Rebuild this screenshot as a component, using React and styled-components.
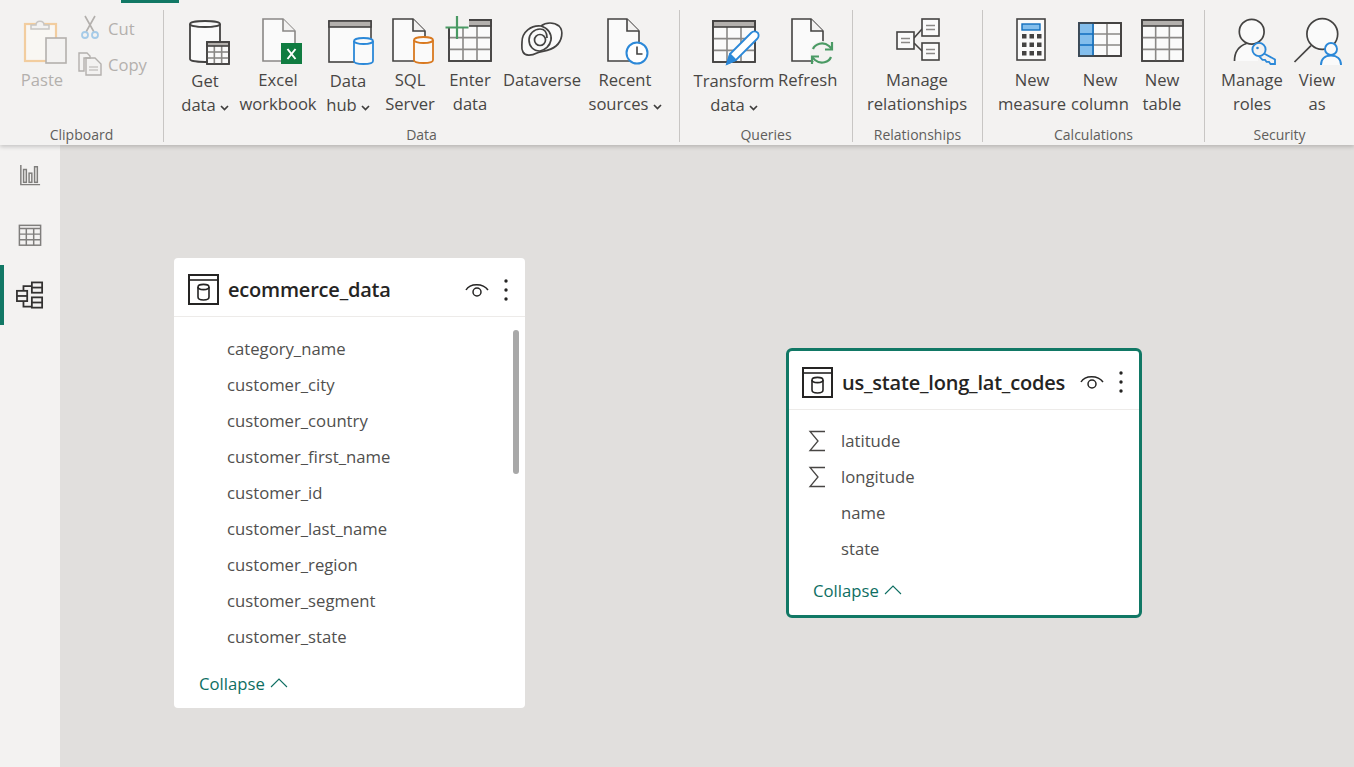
import React from 'react'
import styled, { createGlobalStyle } from 'styled-components'

const TEAL = '#117865'
const INK = '#444342'
const PAPER = '#fafafa'
const HEAD = '#b3b0ad'
const BLUE = '#2b88d8'
const GREEN = '#4a9a64'

const GlobalStyle = createGlobalStyle`
  html, body {
    margin: 0;
    height: 100%;
    overflow: hidden;
    background: #f3f2f1;
    font-family: "Open Sans", "Noto Sans", "Liberation Sans", sans-serif;
  }
`

const Page = styled.div`
  display: flex;
  flex-direction: column;
  height: 100vh;
`

const Ribbon = styled.header`
  position: relative;
  z-index: 2;
  display: flex;
  flex: 0 0 145px;
  background: #f3f2f1;
  box-shadow: 0 2px 4px rgba(0, 0, 0, 0.18);
`

const TabMarker = styled.div`
  position: absolute;
  top: 0;
  left: 121px;
  width: 58px;
  height: 3px;
  background: ${TEAL};
`

const Group = styled.section`
  display: flex;
  flex-direction: column;
  box-sizing: border-box;
  flex: 0 0 ${p => p.$w}px;
  height: 132px;
  margin-top: 10px;
  border-right: ${p => (p.$last ? 'none' : '1px solid #c8c6c4')};
`

const GroupItems = styled.div`
  display: flex;
  flex: 1;
  padding: 8px 0 0 ${p => p.$pad || 0}px;
`

const GroupLabel = styled.div`
  margin: 1px 0 -1px;
  font-size: 14px;
  line-height: 16px;
  text-align: center;
  color: #605e5c;
`

const BigButton = styled.div`
  display: flex;
  flex-direction: column;
  align-items: center;
  flex: 0 0 ${p => p.$w}px;
  color: ${p => (p.$off ? '#b3b0ad' : '#484644')};
  font-size: 16.6px;
  line-height: 24px;
  white-space: nowrap;

  svg.big {
    display: block;
    overflow: visible;
    margin-bottom: ${p => (p.$low ? 3 : 2)}px;
  }
`

const Chevron = styled.svg`
  width: 9px;
  height: 6px;
  margin-left: 4px;
  vertical-align: 0;
  fill: none;
  stroke: #3f3e3d;
  stroke-width: 1.7;
`

const SmallStack = styled.div`
  display: flex;
  flex-direction: column;
  margin: -8px 0 0 6px;
`

const SmallButton = styled.div`
  display: flex;
  align-items: center;
  gap: 6px;
  height: 36px;
  font-size: 16.6px;
  color: #b3b0ad;

  svg {
    flex: 0 0 24px;
    overflow: visible;
  }
`

const Body = styled.main`
  display: flex;
  flex: 1;
  min-height: 0;
`

const Sidebar = styled.nav`
  flex: 0 0 60px;
  background: #f3f2f1;
`

const NavItem = styled.div`
  display: flex;
  align-items: center;
  justify-content: center;
  box-sizing: border-box;
  height: 60px;
  border-left: 4px solid ${p => (p.$active ? TEAL : 'transparent')};
  padding-right: 4px;
`

const Canvas = styled.div`
  position: relative;
  flex: 1;
  overflow: hidden;
  background: #e1dfdd;
`

const Card = styled.article`
  --inset: ${p => (p.$active ? 2 : 0)}px;
  --bleed: ${p => (p.$active ? 0 : 3)}px;
  position: absolute;
  left: ${p => p.$x}px;
  top: ${p => p.$y}px;
  display: flex;
  flex-direction: column;
  box-sizing: border-box;
  width: ${p => p.$w}px;
  height: ${p => p.$h}px;
  background: #fff;
  border: 3px solid ${p => (p.$active ? TEAL : 'transparent')};
  border-radius: ${p => (p.$active ? 6 : 4)}px;
`

const CardHeader = styled.div`
  display: flex;
  align-items: center;
  box-sizing: border-box;
  flex: 0 0 ${p => p.$h}px;
  margin: 0 calc(-1 * var(--bleed));
  padding: calc(2px + var(--inset)) calc(13px + var(--inset) + var(--bleed)) 0 calc(11px + var(--inset) + var(--bleed));
  border-bottom: 1px solid #edebe9;
`

const CardTitle = styled.h3`
  margin: 0 0 0 9px;
  font-size: 20px;
  font-weight: 600;
  color: #252423;
  white-space: nowrap;
  letter-spacing: -0.2px;
`

const HeaderActions = styled.div`
  display: flex;
  align-items: center;
  gap: 14px;
  margin-left: auto;
`

const FieldList = styled.ul`
  flex: 1;
  margin: 0;
  padding: ${p => p.$top}px 0 0;
  list-style: none;
`

const Field = styled.li`
  display: flex;
  align-items: center;
  height: 36px;
  padding-left: calc(17px + var(--inset));
  font-size: 16.7px;
  color: #504f4e;
`

const FieldIcon = styled.span`
  display: flex;
  flex: 0 0 33px;
  padding-top: 2px;
`

const Collapse = styled.div`
  display: flex;
  align-items: center;
  gap: 5px;
  height: 36px;
  margin-bottom: ${p => p.$bottom}px;
  padding-left: calc(22px + var(--inset));
  font-size: 16.7px;
  color: #0e6e62;
`

const Scrollbar = styled.div`
  position: absolute;
  top: 69px;
  right: 3px;
  width: 6px;
  height: 144px;
  border-radius: 3px;
  background: #a8a8a8;
`

const Big = ({ children }) => (
  <svg className="big" width="52" height="48" viewBox="0 0 52 48">{children}</svg>
)

const Doc = ({ x, y = 1, w = 32, h = 42, stroke = INK }) => (
  <g fill={PAPER} stroke={stroke} strokeWidth="1.6">
    <path d={`M${x} ${y}H${x + w - 12}L${x + w} ${y + 12}V${y + h}H${x}Z`} />
    <path d={`M${x + w - 12} ${y}V${y + 12}H${x + w}`} fill="#f3f2f1" />
  </g>
)

const Cylinder = ({ x, y, w, h, stroke }) => (
  <g fill={PAPER} stroke={stroke} strokeWidth="1.8">
    <path d={`M${x} ${y + 3}V${y + h - 3}C${x} ${y + h + 1} ${x + w} ${y + h + 1} ${x + w} ${y + h - 3}V${y + 3}`} />
    <ellipse cx={x + w / 2} cy={y + 3} rx={w / 2} ry="3" />
  </g>
)

const Grid = ({ x, y, w, h, cols = 3, rows = 3, header = 0, stroke = INK, width = 1.6 }) => {
  const lines = []
  const top = y + header
  for (let c = 1; c < cols; c++) {
    const cx = x + (w * c) / cols
    lines.push(<path key={`c${c}`} d={`M${cx} ${top}V${y + h}`} stroke="#8a8886" />)
  }
  for (let r = 1; r < rows; r++) {
    const cy = top + ((h - header) * r) / rows
    lines.push(<path key={`r${r}`} d={`M${x} ${cy}H${x + w}`} stroke="#8a8886" />)
  }
  return (
    <g stroke={stroke} strokeWidth={width} fill="none">
      <rect x={x} y={y} width={w} height={h} fill={PAPER} />
      {lines}
      {header > 0 && <rect x={x} y={y} width={w} height={header} fill={HEAD} />}
      <rect x={x} y={y} width={w} height={h} />
    </g>
  )
}

const GetDataIcon = () => (
  <Big>
    <Cylinder x={11} y={3} w={30} h={41} stroke={INK} />
    <Grid x={28} y={24} w={22} h={22} header={4} />
  </Big>
)

const ExcelIcon = () => (
  <Big>
    <Doc x={11} stroke="#8a8886" />
    <rect x="29" y="25" width="21" height="21" fill="#107c41" />
    <path d="M35.5 31l8 10M43.5 31l-8 10" stroke="#fff" strokeWidth="2" fill="none" />
  </Big>
)

const DataHubIcon = () => (
  <Big>
    <rect x="7" y="3" width="42" height="41" fill={PAPER} stroke={INK} strokeWidth="1.6" />
    <rect x="7" y="3" width="42" height="6" fill={HEAD} stroke={INK} strokeWidth="1.6" />
    <Cylinder x={32} y={20} w={19} h={26} stroke={BLUE} />
  </Big>
)

const SqlIcon = () => (
  <Big>
    <Doc x={9} />
    <Cylinder x={30} y={19} w={19} h={26} stroke="#d9791f" />
  </Big>
)

const EnterDataIcon = () => (
  <Big>
    <Grid x={5} y={2} w={42} h={41} header={6} />
    <rect x="1" y="-2" width="24" height="12" fill="#f3f2f1" />
    <rect x="4.2" y="10" width="1.6" height="11" fill={INK} />
    <path d="M13 -2V21M1.5 9.5H24.5" stroke={GREEN} strokeWidth="2.2" fill="none" />
  </Big>
)

const DataverseIcon = () => (
  <Big>
    <g fill={PAPER} stroke={INK} strokeWidth="1.7">
      <path d="M6 24C6 14 15 7 25 8C30 4 38 4 43 8C48 13 46 23 40 28C34 33 26 33 21 35C15 38 9 38 7 34C5 31 6 28 6 24Z" />
      <path d="M25 8C32 10 36 16 35 22C34 28 29 32 24 33C17 33 13 28 13 22C13 16 18 11 24 11C29 11 31 15 31 20" fill="none" />
      <circle cx="24" cy="22" r="5.5" fill="none" />
    </g>
  </Big>
)

const RecentIcon = () => (
  <Big>
    <Doc x={9} w={31} />
    <circle cx="38" cy="35" r="10.5" fill="#fff" stroke={BLUE} strokeWidth="2" />
    <path d="M38 28.5V36H43.5" fill="none" stroke={INK} strokeWidth="1.6" />
  </Big>
)

const TransformIcon = () => (
  <Big>
    <Grid x={5} y={3} w={42} h={41} header={6} />
    <path d="M22 36L43 15C45 13 48 13 50 15C51 17 51 19 49 21L28 42L19 46Z" fill="#fff" stroke={BLUE} strokeWidth="1.8" />
    <path d="M22 36L28 42L19 46Z" fill={BLUE} stroke={BLUE} strokeWidth="1.4" />
  </Big>
)

const RefreshIcon = () => (
  <Big>
    <Doc x={10} w={31} />
    <circle cx="40" cy="35" r="12" fill="#f3f2f1" />
    <g fill="none" stroke={GREEN} strokeWidth="2.2">
      <path d="M31 31C33 26 41 23 47 28L50 31" />
      <path d="M49 39C47 44 39 47 33 42L30 39" />
      <path d="M50 24V31.5H43M30 46V38.5H37" />
    </g>
  </Big>
)

const RelBox = ({ x, y }) => (
  <g>
    <rect x={x} y={y} width="17" height="17" fill={PAPER} stroke={INK} strokeWidth="1.6" />
    <path d={`M${x + 4} ${y + 6.5}H${x + 13}M${x + 4} ${y + 10.5}H${x + 13}`} stroke="#8a8886" strokeWidth="1.4" />
  </g>
)

const RelationshipsIcon = () => (
  <Big>
    <path d="M23 20L31 11M23 25L31 33" stroke={INK} strokeWidth="1.6" fill="none" />
    <RelBox x={6} y={14} />
    <RelBox x={31} y={1} />
    <RelBox x={31} y={25} />
  </Big>
)

const MeasureIcon = () => {
  const keys = []
  for (let r = 0; r < 3; r++) {
    for (let c = 0; c < 3; c++) {
      keys.push(<rect key={`${r}-${c}`} x={16 + c * 7.5} y={16 + r * 8.5} width="4.5" height="4.5" fill={INK} />)
    }
  }
  return (
    <Big>
      <rect x="11" y="1" width="28" height="41" fill={PAPER} stroke={INK} strokeWidth="1.6" />
      <rect x="16" y="6" width="18" height="6" fill="#83beec" stroke="#106ebe" strokeWidth="1.4" />
      {keys}
    </Big>
  )
}

const ColumnIcon = () => (
  <Big>
    <Grid x={5} y={5} w={42} h={33} />
    <rect x="5" y="5" width="14" height="33" fill="#83beec" stroke="#106ebe" strokeWidth="1.6" />
    <path d="M5 16H19M5 27H19" stroke="#106ebe" strokeWidth="1.6" />
    <rect x="5" y="5" width="42" height="33" fill="none" stroke={INK} strokeWidth="1.6" />
  </Big>
)

const TableIcon = () => (
  <Big>
    <Grid x={6} y={2} w={41} h={41} header={6} />
  </Big>
)

const RolesIcon = () => (
  <Big>
    <path d="M8.5 43C8.5 34 13 28 20.5 25.5L32 30V43Z" fill={PAPER} />
    <g fill={PAPER} stroke={INK} strokeWidth="1.7">
      <path d="M8.5 43C8.5 34 13 28 20.5 25.5" fill="none" />
      <circle cx="25.7" cy="13.7" r="12.4" />
    </g>
    <path d="M38 35.5L49 41.5V46H44.5L43 43.8H40.5L39 41.8H36.5L33 38L38 35.5Z" fill="#f3f2f1" stroke={BLUE} strokeWidth="1.8" />
    <circle cx="33" cy="31.5" r="6.6" fill="#f3f2f1" stroke={BLUE} strokeWidth="1.9" />
    <circle cx="31.5" cy="30" r="1.3" fill={BLUE} />
  </Big>
)

const ViewAsIcon = () => (
  <Big>
    <g fill={PAPER} stroke={INK} strokeWidth="1.7">
      <circle cx="31.3" cy="16" r="15.4" />
      <path d="M3.5 44L20 27.7" fill="none" />
    </g>
    <path d="M30 47C30 41 34 37.5 40 37.5C46 37.5 50 41 50 47Z" fill={PAPER} stroke="none" />
    <path d="M30 47C30 41 34 37.5 40 37.5C46 37.5 50 41 50 47" fill="none" stroke={BLUE} strokeWidth="1.9" />
    <circle cx="40" cy="31" r="6" fill={PAPER} stroke={BLUE} strokeWidth="1.9" />
  </Big>
)

const PasteIcon = () => (
  <Big>
    <rect x="9" y="6" width="31" height="37" fill="#f9f7f3" stroke="#f2cd9f" strokeWidth="2.2" />
    <path d="M15 11V7H20C20 2 28 2 28 7H33V11Z" fill="#f3f2f1" stroke="#c8c6c4" strokeWidth="1.5" />
    <rect x="30" y="20" width="20" height="25" fill="#f3f2f1" stroke="#b3b0ad" strokeWidth="1.6" />
  </Big>
)

const CutIcon = () => (
  <svg width="24" height="26" viewBox="0 0 24 26">
    <path d="M7 1L16 17M17 1L8 17" stroke="#b3b0ad" strokeWidth="1.6" fill="none" />
    <circle cx="7" cy="20" r="3" fill="none" stroke="#a6cbe8" strokeWidth="1.8" />
    <circle cx="17" cy="20" r="3" fill="none" stroke="#a6cbe8" strokeWidth="1.8" />
  </svg>
)

const CopyIcon = () => (
  <svg width="24" height="24" viewBox="0 0 24 24">
    <path d="M1 1H9L12 4V6H6V19H1Z" fill="none" stroke="#b3b0ad" strokeWidth="1.4" />
    <path d="M8 6H17L23 12V23H8Z" fill="none" stroke="#b3b0ad" strokeWidth="1.4" />
    <path d="M11 15H20M11 18H20" stroke="#b3b0ad" strokeWidth="1.2" />
  </svg>
)

const ReportNav = () => (
  <svg width="22" height="22" viewBox="0 0 24 24" fill="none" stroke="#7f7e7c" strokeWidth="1.6">
    <path d="M2 1V22.5H23" />
    <rect x="5" y="6" width="3" height="14" />
    <rect x="11" y="10" width="3" height="10" />
    <rect x="17" y="3" width="3" height="17" />
  </svg>
)

const DataNav = () => (
  <svg width="24" height="23" viewBox="0 0 26 24" fill="none" stroke="#7f7e7c" strokeWidth="1.6">
    <rect x="1.5" y="1" width="23" height="21.5" />
    <path d="M1.5 4.5H24.5M1.5 10.5H24.5M1.5 16.5H24.5M9 4.5V22.5M17 4.5V22.5" />
  </svg>
)

const ModelNav = () => (
  <svg width="28" height="29" viewBox="0 0 30 30" fill="none" stroke="#323130" strokeWidth="1.9">
    <path d="M8 11V5H17M8 21V27H17" />
    <rect x="1" y="10" width="11" height="11" fill="#f3f2f1" />
    <path d="M1 15.5H12" />
    <rect x="17" y="1" width="11" height="11" fill="#f3f2f1" />
    <path d="M17 6.5H28" />
    <rect x="17" y="17" width="11" height="11" fill="#f3f2f1" />
    <path d="M17 22.5H28" />
  </svg>
)

const TableGlyph = () => (
  <svg width="31" height="31" viewBox="0 0 31 31" fill="none" stroke="#252423">
    <rect x="1" y="1" width="29" height="29" strokeWidth="2" />
    <path d="M1 6H30" strokeWidth="1.6" />
    <path d="M10 13V23C10 27 21 27 21 23V13" strokeWidth="1.6" />
    <ellipse cx="15.5" cy="13" rx="5.5" ry="2.6" strokeWidth="1.6" />
  </svg>
)

const EyeGlyph = () => (
  <svg width="24" height="16" viewBox="0 0 24 16" fill="none" stroke="#252423" strokeWidth="1.5">
    <path d="M1 8C5 1 18 1 23 8" />
    <circle cx="12" cy="10" r="4" />
  </svg>
)

const MoreGlyph = () => (
  <svg width="6" height="22" viewBox="0 0 6 22" fill="#252423">
    <circle cx="3" cy="2" r="1.7" />
    <circle cx="3" cy="11" r="1.7" />
    <circle cx="3" cy="20" r="1.7" />
  </svg>
)

const SigmaGlyph = () => (
  <svg width="18" height="22" viewBox="0 0 18 22" fill="none" stroke="#484644" strokeWidth="1.3">
    <path d="M17 1.5H2L10 11L2 20.5H17" />
  </svg>
)

const CaretUp = () => (
  <svg width="18" height="10" viewBox="0 0 18 10" fill="none" stroke="#0e6e62" strokeWidth="1.1">
    <path d="M1 9L9 1L17 9" />
  </svg>
)

const Down = () => (
  <Chevron viewBox="0 0 9 6"><path d="M1 1L4.5 4.5L8 1" /></Chevron>
)

const groups = [
  {
    label: 'Data', w: 516, pad: 10,
    items: [
      { w: 62, a: 'Get', b: 'data', more: true, low: true, Icon: GetDataIcon },
      { w: 84, a: 'Excel', b: 'workbook', Icon: ExcelIcon },
      { w: 56, a: 'Data', b: 'hub', more: true, low: true, Icon: DataHubIcon },
      { w: 68, a: 'SQL', b: 'Server', Icon: SqlIcon },
      { w: 52, a: 'Enter', b: 'data', Icon: EnterDataIcon },
      { w: 92, a: 'Dataverse', Icon: DataverseIcon },
      { w: 74, a: 'Recent', b: 'sources', more: true, Icon: RecentIcon },
    ],
  },
  {
    label: 'Queries', w: 173, pad: 10,
    items: [
      { w: 88, a: 'Transform', b: 'data', more: true, low: true, Icon: TransformIcon },
      { w: 58, a: 'Refresh', Icon: RefreshIcon },
    ],
  },
  {
    label: 'Relationships', w: 130, pad: 0,
    items: [{ w: 128, a: 'Manage', b: 'relationships', Icon: RelationshipsIcon }],
  },
  {
    label: 'Calculations', w: 222, pad: 10,
    items: [
      { w: 78, a: 'New', b: 'measure', Icon: MeasureIcon },
      { w: 58, a: 'New', b: 'column', Icon: ColumnIcon },
      { w: 66, a: 'New', b: 'table', Icon: TableIcon },
    ],
  },
  {
    label: 'Security', w: 149, pad: 10, last: true,
    items: [
      { w: 74, a: 'Manage', b: 'roles', Icon: RolesIcon },
      { w: 56, a: 'View', b: 'as', Icon: ViewAsIcon },
    ],
  },
]

const ecommerceFields = [
  'category_name', 'customer_city', 'customer_country', 'customer_first_name', 'customer_id',
  'customer_last_name', 'customer_region', 'customer_segment', 'customer_state',
]

const stateFields = [
  { name: 'latitude', sum: true },
  { name: 'longitude', sum: true },
  { name: 'name' },
  { name: 'state' },
]

function TableCard({ name, fields, x, y, w, h, head, top, bottom, active, scroll }) {
  return (
    <Card $x={x} $y={y} $w={w} $h={h} $active={active}>
      <CardHeader $h={head}>
        <TableGlyph />
        <CardTitle>{name}</CardTitle>
        <HeaderActions>
          <EyeGlyph />
          <MoreGlyph />
        </HeaderActions>
      </CardHeader>
      <FieldList $top={top}>
        {fields.map(f => (
          <Field key={f.name}>
            <FieldIcon>{f.sum && <SigmaGlyph />}</FieldIcon>
            {f.name}
          </Field>
        ))}
      </FieldList>
      <Collapse $bottom={bottom}>Collapse <CaretUp /></Collapse>
      {scroll && <Scrollbar />}
    </Card>
  )
}

export default function App() {
  return (
    <Page>
      <GlobalStyle />
      <Ribbon>
        <TabMarker />
        <Group $w={164}>
          <GroupItems $pad={12}>
            <BigButton $w={60} $off>
              <PasteIcon />
              <span>Paste</span>
            </BigButton>
            <SmallStack>
              <SmallButton><CutIcon />Cut</SmallButton>
              <SmallButton><CopyIcon />Copy</SmallButton>
            </SmallStack>
          </GroupItems>
          <GroupLabel>Clipboard</GroupLabel>
        </Group>
        {groups.map(g => (
          <Group key={g.label} $w={g.w} $last={g.last}>
            <GroupItems $pad={g.pad}>
              {g.items.map(({ Icon, a, b, w, more, low }) => (
                <BigButton key={`${a}${b}`} $w={w} $low={low}>
                  <Icon />
                  <span>{a}</span>
                  {b && <span>{b}{more && <Down />}</span>}
                </BigButton>
              ))}
            </GroupItems>
            <GroupLabel>{g.label}</GroupLabel>
          </Group>
        ))}
      </Ribbon>
      <Body>
        <Sidebar>
          <NavItem><ReportNav /></NavItem>
          <NavItem><DataNav /></NavItem>
          <NavItem $active><ModelNav /></NavItem>
        </Sidebar>
        <Canvas>
          <TableCard
            name="ecommerce_data"
            fields={ecommerceFields.map(name => ({ name }))}
            x={114} y={113} w={351} h={450}
            head={56} top={13} bottom={4}
            scroll
          />
          <TableCard
            name="us_state_long_lat_codes"
            fields={stateFields}
            x={726} y={203} w={356} h={270}
            head={59} top={12} bottom={7}
            active
          />
        </Canvas>
      </Body>
    </Page>
  )
}
